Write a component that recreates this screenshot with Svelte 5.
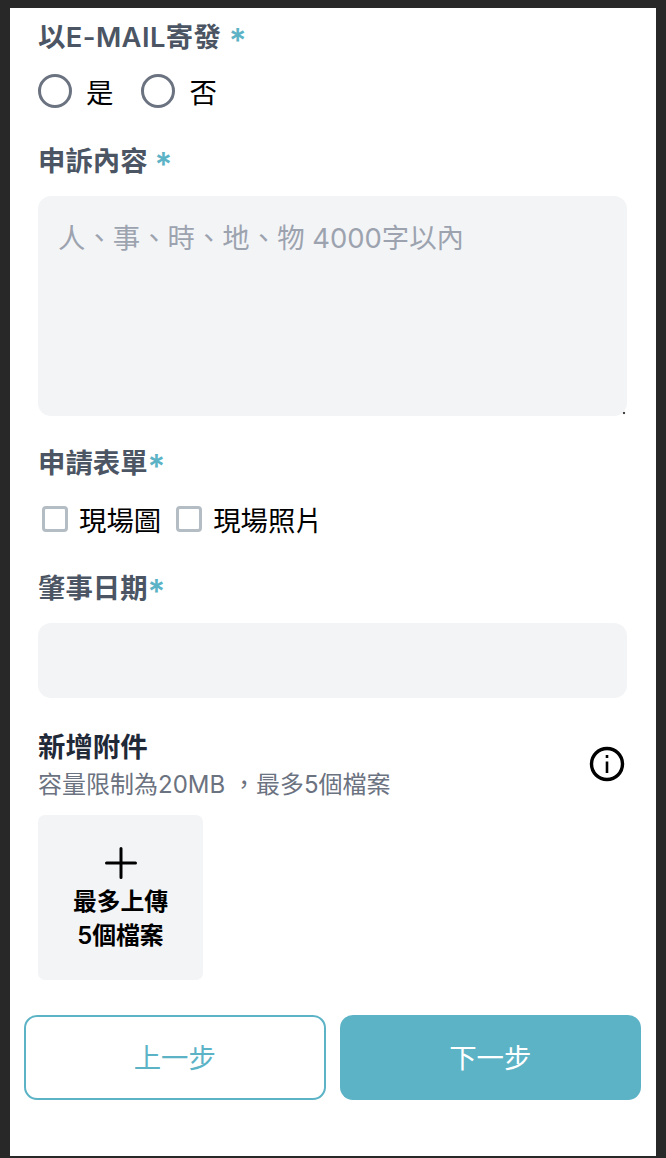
<script lang="ts">
  const replyOptions = ['是', '否'];
  const formOptions = ['現場圖', '現場照片'];
</script>

<div class="page">
  <form class="form" onsubmit={(e) => e.preventDefault()}>
    <section class="email">
      <div class="label">以E-MAIL寄發 <span class="req">*</span></div>
      <div class="radios">
        {#each replyOptions as opt (opt)}
          <label class="radio">
            <input type="radio" name="email" />
            <span>{opt}</span>
          </label>
        {/each}
      </div>
    </section>

    <section class="complaint">
      <div class="label">申訴內容 <span class="req">*</span></div>
      <textarea placeholder="人、事、時、地、物 4000字以內"></textarea>
    </section>

    <section class="forms">
      <div class="label">申請表單<span class="req">*</span></div>
      <div class="checks">
        {#each formOptions as opt (opt)}
          <label class="check">
            <input type="checkbox" />
            <span>{opt}</span>
          </label>
        {/each}
      </div>
    </section>

    <section class="date">
      <div class="label">肇事日期<span class="req">*</span></div>
      <input class="date-input" type="text" />
    </section>

    <section class="attach">
      <div class="attach-head">
        <div>
          <div class="attach-title">新增附件</div>
          <div class="attach-note">容量限制為20MB ，最多5個檔案</div>
        </div>
        <svg class="info" viewBox="0 0 36 36" width="36" height="36" fill="none" stroke="#000" aria-hidden="true">
          <circle cx="18" cy="18" r="15.5" stroke-width="3.4" />
          <path d="M18 15.500V27" stroke-width="2.6" />
          <path d="M18 9v3" stroke-width="2.6" />
        </svg>
      </div>
      <button class="upload" type="button">
        <svg viewBox="0 0 32 32" width="32" height="32" fill="none" stroke="#000" stroke-width="3" stroke-linecap="round" aria-hidden="true">
          <path d="M16 1.500V30.500M1.500 16H30.500" />
        </svg>
        <span>最多上傳<br />5個檔案</span>
      </button>
    </section>
  </form>

  <div class="actions">
    <button class="btn prev" type="button">上一步</button>
    <button class="btn next" type="button">下一步</button>
  </div>
</div>

<style>
  :global(body) {
    margin: 0;
    background: #282828;
  }

  .page {
    box-sizing: border-box;
    height: 1148px;
    margin: 8px 10px 2px;
    background: #fff;
    font-family: Inter, "Noto Sans CJK TC", sans-serif;
    font-size: 27.4px;
    overflow: hidden;
  }

  .form {
    display: flex;
    flex-direction: column;
    padding: 10px 29px 0 28px;
  }

  .label {
    height: 38px;
    line-height: 39px;
    font-weight: 600;
    color: #4b5563;
    white-space: pre-wrap;
  }

  .email .label {
    letter-spacing: 0.4px;
  }

  .req {
    color: #5cb3c6;
    font-size: 33px;
    line-height: 0;
    vertical-align: -5px;
  }

  .radios {
    display: flex;
    gap: 28px;
    margin-top: 16px;
  }

  .radio,
  .check {
    display: flex;
    align-items: center;
    height: 38px;
    color: #000;
    line-height: 38px;
  }

  .radio span,
  .check span {
    padding-top: 2px;
    margin-bottom: -2px;
  }

  .radio input {
    appearance: none;
    box-sizing: border-box;
    width: 34px;
    height: 34px;
    margin: 0 14px 0 0;
    border: 3.3px solid #6b7280;
    border-radius: 50%;
    background: #fff;
  }

  .complaint {
    margin-top: 32px;
  }

  textarea {
    display: block;
    box-sizing: border-box;
    width: 100%;
    height: 220px;
    margin-top: 16px;
    padding: 22px 20px 20px;
    border: 0;
    border-radius: 13px;
    outline: 0;
    background: #f3f4f6;
    font: inherit;
    line-height: 40px;
  }

  textarea::placeholder {
    color: #9ca3af;
    opacity: 1;
  }

  textarea::-webkit-resizer {
    background: radial-gradient(circle at 12px 12px, #444 0 1.2px, transparent 1.6px);
  }

  .forms {
    margin-top: 28px;
  }

  .checks {
    display: flex;
    gap: 15px;
    margin-top: 18px;
    padding-left: 4px;
  }

  .check input {
    appearance: none;
    box-sizing: border-box;
    width: 26px;
    height: 26px;
    margin: 0 11px 0 0;
    border: 3px solid #b4bdc4;
    border-radius: 4px;
    background: #fff;
  }

  .date {
    margin-top: 31px;
  }

  .date-input {
    display: block;
    box-sizing: border-box;
    width: 100%;
    height: 75px;
    margin-top: 16px;
    border: 0;
    border-radius: 13px;
    outline: 0;
    background: #f3f4f6;
  }

  .attach {
    margin-top: 30px;
  }

  .attach-head {
    display: flex;
    align-items: center;
    justify-content: space-between;
  }

  .attach-title {
    height: 36px;
    line-height: 38px;
    font-weight: 600;
    color: #1f2937;
  }

  .attach-note {
    height: 36px;
    margin-top: 3px;
    line-height: 36px;
    font-size: 24px;
    color: #6b7280;
  }

  .info {
    margin: 0 2px 4px 0;
  }

  .upload {
    display: flex;
    flex-direction: column;
    align-items: center;
    justify-content: center;
    box-sizing: border-box;
    width: 165px;
    height: 165px;
    margin-top: 12px;
    padding: 5px 0 0;
    border: 0;
    border-radius: 7px;
    background: #f3f4f6;
    color: #000;
    font: inherit;
    font-size: 23.8px;
    font-weight: 600;
    line-height: 34px;
  }

  .upload span {
    margin-top: 6px;
  }

  .actions {
    display: grid;
    grid-template-columns: 1fr 1fr;
    gap: 14px;
    margin-top: 35px;
    padding: 0 15px 0 14px;
  }

  .btn {
    height: 85px;
    padding: 0 0 3px;
    border-radius: 13px;
    font: inherit;
  }

  .prev {
    border: 2px solid #5cb3c6;
    background: #fff;
    color: #5cb3c6;
  }

  .next {
    border: 0;
    background: #5cb3c6;
    color: #fff;
  }
</style>
